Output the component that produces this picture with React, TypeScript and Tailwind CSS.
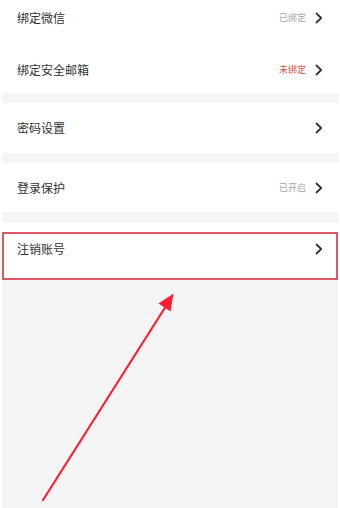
import React from "react";

type Row = {
  label: string;
  value?: string;
  valueColor?: string;
};

function Chevron() {
  return (
    <svg width="8" height="12" viewBox="0 0 8 12" className="shrink-0">
      <polyline
        points="1.5,1.5 6.2,6 1.5,10.5"
        fill="none"
        stroke="#333333"
        strokeWidth="1.8"
        strokeLinecap="round"
        strokeLinejoin="round"
      />
    </svg>
  );
}

function SettingRow({ row, className = "" }: { row: Row; className?: string }) {
  return (
    <div className={`relative flex items-center justify-between bg-white pl-[15px] pr-[15px] ${className}`}>
      <span className="text-[12px] text-[#333333]">{row.label}</span>
      <div className="flex items-center gap-[9px]">
        {row.value && (
          <span className={`text-[9px] ${row.valueColor ?? "text-[#a6a6a6]"}`}>{row.value}</span>
        )}
        <Chevron />
      </div>
    </div>
  );
}

export default function App() {
  return (
    <div
      className="relative h-[508px] w-[340px] overflow-hidden bg-white px-[2px]"
      style={{ fontFamily: '"Noto Sans CJK SC", "Noto Sans", sans-serif' }}
    >
      <div className="flex h-full flex-col bg-[#f5f5f5]">
        <div className="bg-white">
          <SettingRow row={{ label: "绑定微信", value: "已绑定" }} className="h-[43px] pb-[7px]" />
          <SettingRow
            row={{ label: "绑定安全邮箱", value: "未绑定", valueColor: "text-[#d0564a]" }}
            className="h-[50px] pt-[4px]"
          />
        </div>
        <div className="mt-[10px]">
          <SettingRow row={{ label: "密码设置" }} className="h-[50px]" />
        </div>
        <div className="mt-[10px]">
          <SettingRow row={{ label: "登录保护", value: "已开启" }} className="h-[49px]" />
        </div>
        <div className="relative mt-[10px]">
          <SettingRow row={{ label: "注销账号" }} className="h-[58px] pt-[2px] pb-[6px]" />
          {/* highlight box */}
          <div className="pointer-events-none absolute left-0 right-0 top-[10px] bottom-[0px] border-2 border-[#dc5a68]" />
        </div>
      </div>

      {/* annotation arrow */}
      <svg className="pointer-events-none absolute left-0 top-0" width="340" height="508" viewBox="0 0 340 508">
        <line x1="43" y1="500" x2="166" y2="306" stroke="#ff1f30" strokeWidth="2.2" strokeLinecap="round" />
        <polygon points="173.5,293.5 170.5,311.5 158.5,303.5" fill="#ff1f30" />
      </svg>
    </div>
  );
}
